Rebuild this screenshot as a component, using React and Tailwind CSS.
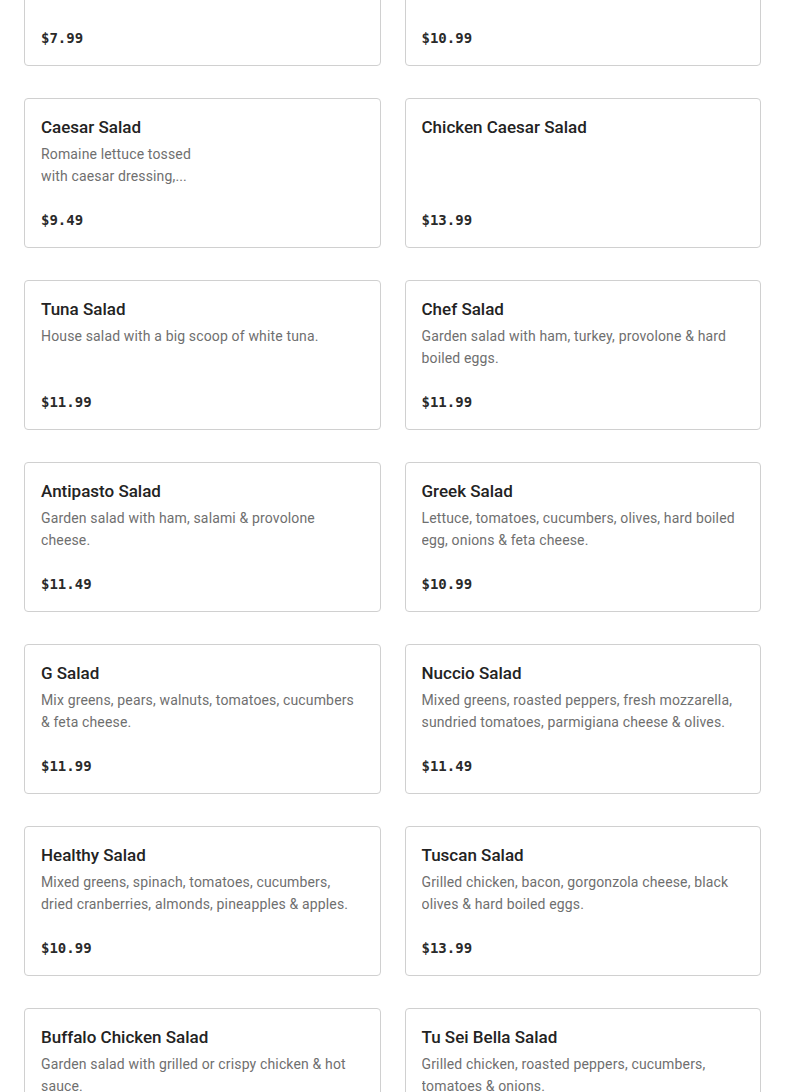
const items = [
  { name: "House Salad", desc: "Mixed greens, tomatoes, cucumbers, onions, carrots & olives.", price: "$7.99" },
  { name: "Grilled Chicken Salad", desc: "House salad topped with grilled chicken breast.", price: "$10.99" },
  { name: "Caesar Salad", desc: ["Romaine lettuce tossed", "with caesar dressing,..."], price: "$9.49" },
  { name: "Chicken Caesar Salad", desc: "", price: "$13.99" },
  { name: "Tuna Salad", desc: "House salad with a big scoop of white tuna.", price: "$11.99" },
  { name: "Chef Salad", desc: "Garden salad with ham, turkey, provolone & hard boiled eggs.", price: "$11.99" },
  { name: "Antipasto Salad", desc: "Garden salad with ham, salami & provolone cheese.", price: "$11.49" },
  { name: "Greek Salad", desc: "Lettuce, tomatoes, cucumbers, olives, hard boiled egg, onions & feta cheese.", price: "$10.99" },
  { name: "G Salad", desc: "Mix greens, pears, walnuts, tomatoes, cucumbers & feta cheese.", price: "$11.99" },
  { name: "Nuccio Salad", desc: "Mixed greens, roasted peppers, fresh mozzarella, sundried tomatoes, parmigiana cheese & olives.", price: "$11.49" },
  { name: "Healthy Salad", desc: "Mixed greens, spinach, tomatoes, cucumbers, dried cranberries, almonds, pineapples & apples.", price: "$10.99" },
  { name: "Tuscan Salad", desc: "Grilled chicken, bacon, gorgonzola cheese, black olives & hard boiled eggs.", price: "$13.99" },
  { name: "Buffalo Chicken Salad", desc: "Garden salad with grilled or crispy chicken & hot sauce.", price: "$11.99" },
  { name: "Tu Sei Bella Salad", desc: "Grilled chicken, roasted peppers, cucumbers, tomatoes & onions.", price: "$12.99" },
];

function MenuCard({ item }) {
  return (
    <div className="flex h-[150px] flex-col rounded-[4px] border border-[#d0d0d0] bg-white px-4 pt-[15px] pb-[15px]">
      <h3 className="text-[17px] leading-[26px] font-medium text-[#232323]">{item.name}</h3>
      <p className="mt-[3px] text-[14px] leading-[22px] text-[#6f6f6f] tracking-[0.15px] line-clamp-2">
        {Array.isArray(item.desc) ? (
          <>
            {item.desc[0]}
            <br />
            {item.desc[1]}
          </>
        ) : (
          item.desc
        )}
      </p>
      <div className="mt-auto text-[14px] leading-6 font-bold text-[#2a2a2a] font-['DejaVu_Sans_Mono',monospace]">
        {item.price}
      </div>
    </div>
  );
}

export default function App() {
  return (
    <div className="h-[1092px] overflow-hidden bg-white font-['Roboto',sans-serif]">
      <div className="-mt-[84px] grid grid-cols-2 gap-x-6 gap-y-8 px-6">
        {items.map((item) => (
          <MenuCard key={item.name} item={item} />
        ))}
      </div>
    </div>
  );
}
